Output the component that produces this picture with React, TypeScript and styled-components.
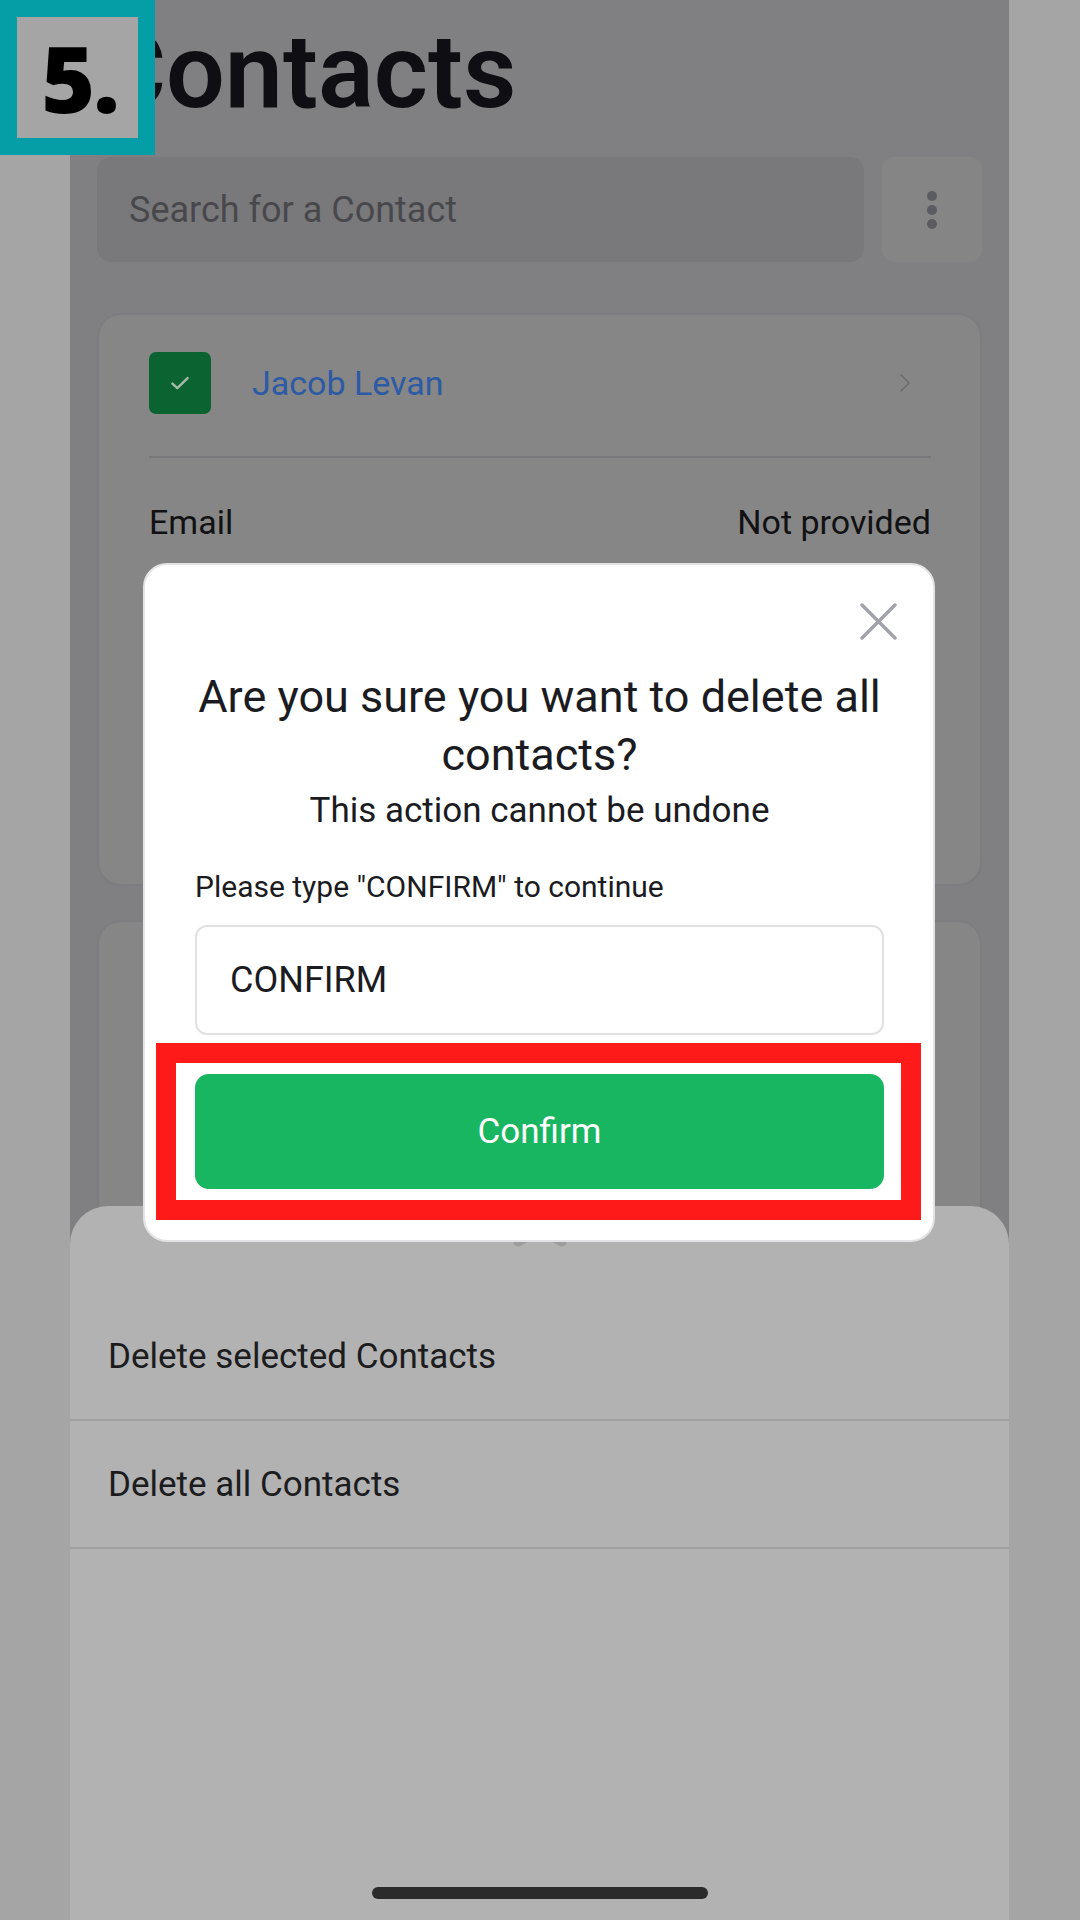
import React from "react";
import styled, { createGlobalStyle } from "styled-components";

const GlobalStyle = createGlobalStyle`
  html, body {
    margin: 0;
    padding: 0;
  }
  body {
    font-family: Roboto, "Liberation Sans", sans-serif;
    background: #a5a5a5;
  }
  * {
    box-sizing: border-box;
  }
`;

const Frame = styled.div`
  position: relative;
  display: flex;
  width: 1080px;
  height: 1920px;
  overflow: hidden;
  background: #a5a5a5;
`;

const Side = styled.div<{ $w: number }>`
  width: ${(p) => p.$w}px;
  flex-shrink: 0;
  background: #a5a5a5;
`;

const Phone = styled.div`
  position: relative;
  flex: 1;
  padding: 0 27px;
  background: #808082;
  overflow: hidden;
`;

const Title = styled.h1`
  margin: 20px 0 0 1px;
  font-size: 104px;
  line-height: 104px;
  font-weight: 600;
  color: #0e0e13;
`;

const SearchRow = styled.div`
  display: flex;
  gap: 18px;
  height: 105px;
  margin-top: 33px;
`;

const SearchBox = styled.div`
  flex: 1;
  display: flex;
  align-items: center;
  padding-left: 32px;
  border-radius: 14px;
  background: #79797b;
  font-size: 36px;
  color: #48484c;
`;

const MenuButton = styled.div`
  width: 100px;
  display: flex;
  flex-direction: column;
  align-items: center;
  justify-content: center;
  gap: 4px;
  border-radius: 12px;
  background: #858585;

  span {
    width: 10px;
    height: 10px;
    border-radius: 50%;
    background: #5b5b62;
  }
`;

const Card = styled.div<{ $h: number; $top: number }>`
  height: ${(p) => p.$h}px;
  margin-top: ${(p) => p.$top}px;
  padding: 37px 49px 0 50px;
  border: 2px solid #7d7d7f;
  border-radius: 24px;
  background: #868686;
`;

const CardHeader = styled.div`
  display: flex;
  align-items: center;
  height: 62px;
`;

const Checkbox = styled.div`
  width: 62px;
  height: 62px;
  display: flex;
  align-items: center;
  justify-content: center;
  border-radius: 7px;
  background: #0b6331;
`;

const Name = styled.div`
  flex: 1;
  margin-left: 41px;
  font-size: 34px;
  color: #2d5aa5;
`;

const Divider = styled.div`
  height: 2px;
  margin-top: 42px;
  background: #78787a;
`;

const InfoRow = styled.div`
  display: flex;
  justify-content: space-between;
  margin-top: 44px;
  font-size: 34px;
  line-height: 40px;
  color: #111113;
`;

const Sheet = styled.div`
  position: absolute;
  top: 1206px;
  left: 0;
  right: 0;
  bottom: 0;
  z-index: 1;
  padding-top: 87px;
  border-radius: 38px 38px 0 0;
  background: #b2b2b2;
`;

const Handle = styled.svg`
  position: absolute;
  top: 20px;
  left: 50%;
  transform: translateX(-50%);
`;

const SheetRow = styled.div`
  display: flex;
  align-items: center;
  height: 128px;
  padding-left: 38px;
  border-bottom: 2px solid #a0a0a0;
  font-size: 35px;
  color: #1c1c1e;
`;

const HomeBar = styled.div`
  position: absolute;
  bottom: 21px;
  left: 50%;
  width: 336px;
  height: 12px;
  transform: translateX(-50%);
  border-radius: 6px;
  background: #2b2b2b;
`;

const Modal = styled.div`
  position: absolute;
  top: 563px;
  left: 73px;
  z-index: 2;
  width: 792px;
  padding: 0 49px 51px 50px;
  border: 2px solid #e3e3e6;
  border-radius: 24px;
  background: #ffffff;
  color: #1b1b22;
`;

const CloseButton = styled.svg`
  position: absolute;
  top: 38px;
  right: 36px;
`;

const ModalTitle = styled.h2`
  margin: 103px -30px 0;
  font-size: 45px;
  line-height: 58px;
  font-weight: 400;
  text-align: center;
`;

const ModalSub = styled.p`
  margin: 7px 0 0;
  font-size: 35px;
  line-height: 40px;
  text-align: center;
`;

const Label = styled.div`
  margin-top: 39px;
  font-size: 30px;
  line-height: 34px;
`;

const Input = styled.div`
  display: flex;
  align-items: center;
  height: 110px;
  margin-top: 21px;
  padding-left: 33px;
  border: 2px solid #e1e1e4;
  border-radius: 12px;
  font-size: 36px;
`;

const ConfirmButton = styled.div`
  display: flex;
  align-items: center;
  justify-content: center;
  height: 115px;
  margin-top: 39px;
  border-radius: 14px;
  background: #19b661;
  font-size: 35px;
  color: #ffffff;
`;

const Highlight = styled.div`
  position: absolute;
  top: 478px;
  left: 11px;
  width: 765px;
  height: 177px;
  border: 20px solid #ff1a1a;
`;

const StepBadge = styled.div`
  position: absolute;
  top: 0;
  left: 0;
  z-index: 3;
  width: 155px;
  height: 155px;
  padding: 17px;
  background: #069ea6;

  div {
    width: 100%;
    height: 100%;
    display: flex;
    align-items: center;
    justify-content: center;
    padding-left: 4px;
    background: #a5a5a5;
    font-family: "Open Sans", "Liberation Sans", sans-serif;
    font-size: 92px;
    font-weight: 800;
    letter-spacing: -2px;
    color: #000000;
  }
`;

const App = () => {
  return (
    <>
      <GlobalStyle />
      <Frame>
        <Side $w={70} />
        <Phone>
          <Title>Contacts</Title>
          <SearchRow>
            <SearchBox>Search for a Contact</SearchBox>
            <MenuButton>
              <span />
              <span />
              <span />
            </MenuButton>
          </SearchRow>

          <Card $h={573} $top={51}>
            <CardHeader>
              <Checkbox>
                <svg width="26" height="26" viewBox="0 0 24 24" fill="none">
                  <path d="M5 12.5l4.5 4.2L19 7.5" stroke="#a4bba9" strokeWidth="2.2" strokeLinecap="round" strokeLinejoin="round" />
                </svg>
              </Checkbox>
              <Name>Jacob Levan</Name>
              <svg width="12" height="20" viewBox="0 0 12 20" fill="none" style={{ marginRight: 20 }}>
                <path d="M2 2l8 8-8 8" stroke="#6b6b6d" strokeWidth="1.6" strokeLinecap="round" strokeLinejoin="round" />
              </svg>
            </CardHeader>
            <Divider />
            <InfoRow>
              <span>Email</span>
              <span>Not provided</span>
            </InfoRow>
          </Card>
          <Card $h={640} $top={34} />

          <Sheet>
            <Handle width="60" height="24" viewBox="0 0 60 24" fill="none">
              <path d="M8 16L30 4L52 16" stroke="#9c9c9c" strokeWidth="9" strokeLinecap="round" strokeLinejoin="round" />
            </Handle>
            <SheetRow>Delete selected Contacts</SheetRow>
            <SheetRow>Delete all Contacts</SheetRow>
            <HomeBar />
          </Sheet>

          <Modal>
            <CloseButton width="37" height="37" viewBox="0 0 37 37" fill="none">
              <path d="M2 2L35 35M35 2L2 35" stroke="#a2a2aa" strokeWidth="3.5" strokeLinecap="round" />
            </CloseButton>
            <ModalTitle>
              Are you sure you want to delete all
              <br />
              contacts?
            </ModalTitle>
            <ModalSub>This action cannot be undone</ModalSub>
            <Label>Please type "CONFIRM" to continue</Label>
            <Input>CONFIRM</Input>
            <ConfirmButton>Confirm</ConfirmButton>
            <Highlight />
          </Modal>
        </Phone>
        <Side $w={71} />
        <StepBadge>
          <div>5.</div>
        </StepBadge>
      </Frame>
    </>
  );
};

export default App;
